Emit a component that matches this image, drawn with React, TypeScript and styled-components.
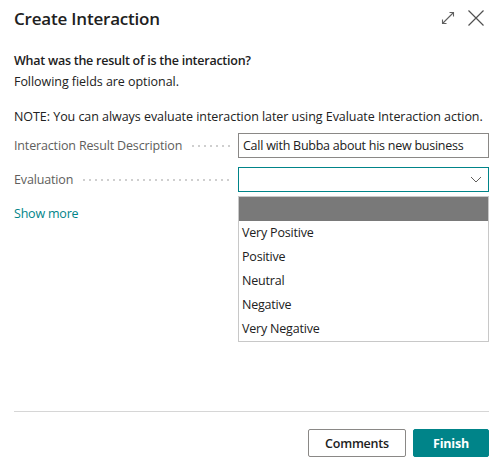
import styled, { createGlobalStyle } from 'styled-components'

const GlobalStyle = createGlobalStyle`
  html, body {
    margin: 0;
    padding: 0;
    background: #ffffff;
  }
  body {
    font-family: 'Open Sans', 'Noto Sans', sans-serif;
    color: #212121;
  }
`

const Dialog = styled.div`
  width: 498px;
  height: 470px;
  box-sizing: border-box;
  padding: 0 9px 0 14px;
  display: flex;
  flex-direction: column;
  background: #ffffff;
`

const Header = styled.div`
  height: 36px;
  display: flex;
  align-items: center;
  justify-content: space-between;
`

const Title = styled.h1`
  margin: 0;
  font-size: 17px;
  font-weight: 600;
  color: #212121;
  letter-spacing: -0.2px;
`

const HeaderActions = styled.div`
  display: flex;
  align-items: center;
  gap: 12px;
  padding-right: 4px;
`

const IconButton = styled.button`
  border: none;
  background: transparent;
  padding: 0;
  display: flex;
  align-items: center;
  justify-content: center;
  cursor: pointer;
`

const Body = styled.div`
  flex: 1;
  padding-top: 14px;
  display: flex;
  flex-direction: column;
`

const Intro = styled.p<{ $bold?: boolean }>`
  margin: 0;
  font-size: 12.5px;
  line-height: 21px;
  font-weight: ${({ $bold }) => ($bold ? 600 : 400)};
  letter-spacing: ${({ $bold }) => ($bold ? '-0.25px' : '-0.05px')};
`

const Note = styled(Intro)`
  margin-top: 14px;
`

const Fields = styled.div`
  margin-top: 6px;
  display: flex;
  flex-direction: column;
  gap: 9px;
`

const FieldRow = styled.div`
  display: grid;
  grid-template-columns: 224px 1fr;
  align-items: center;
`

const Label = styled.div`
  display: flex;
  align-items: center;
  font-size: 12.5px;
  color: #605e5c;
  letter-spacing: -0.15px;
  white-space: nowrap;
  overflow: hidden;
  padding-right: 6px;

  &::after {
    content: '';
    flex: 1;
    height: 2px;
    margin-left: 8px;
    background-image: radial-gradient(circle, #cfcfcf 1px, transparent 1.2px);
    background-size: 6px 2px;
    background-repeat: repeat-x;
  }
`

const InputBox = styled.div<{ $focused?: boolean }>`
  position: relative;
  height: 25px;
  box-sizing: border-box;
  border: 1px solid ${({ $focused }) => ($focused ? '#008489' : '#8a8886')};
  display: flex;
  align-items: center;
  justify-content: space-between;
  padding: 0 6px 0 4px;
  font-size: 12.5px;
  letter-spacing: -0.25px;
  color: #212121;
  background: #ffffff;
`

const Dropdown = styled.ul`
  position: absolute;
  top: 28px;
  left: -1px;
  right: -1px;
  margin: 0;
  padding: 0;
  list-style: none;
  border: 1px solid #c8c8c8;
  background: #ffffff;
  z-index: 2;
`

const Option = styled.li<{ $active?: boolean }>`
  height: 24px;
  line-height: 24px;
  padding: 0 3px;
  font-size: 12.5px;
  letter-spacing: -0.2px;
  color: #212121;
  background: ${({ $active }) => ($active ? '#797979' : 'transparent')};
`

const ShowMore = styled.a`
  margin-top: 12px;
  font-size: 12.5px;
  letter-spacing: -0.2px;
  color: #008489;
  line-height: 20px;
  cursor: pointer;
`

const Footer = styled.div`
  border-top: 1px solid #d6d6d6;
  height: 59px;
  box-sizing: border-box;
  padding-top: 17px;
  display: flex;
  justify-content: flex-end;
  gap: 7px;
`

const Button = styled.button<{ $primary?: boolean }>`
  height: 28px;
  width: ${({ $primary }) => ($primary ? '76px' : '98px')};
  box-sizing: border-box;
  padding: 0;
  font-family: inherit;
  font-size: 12.5px;
  letter-spacing: -0.2px;
  font-weight: ${({ $primary }) => ($primary ? 700 : 600)};
  color: ${({ $primary }) => ($primary ? '#ffffff' : '#212121')};
  background: ${({ $primary }) => ($primary ? '#008489' : '#ffffff')};
  border: 1px solid ${({ $primary }) => ($primary ? '#008489' : '#8a8886')};
  border-radius: 2px;
  cursor: pointer;
`

const options = ['Very Positive', 'Positive', 'Neutral', 'Negative', 'Very Negative']

function App() {
  return (
    <>
      <GlobalStyle />
      <Dialog>
        <Header>
          <Title>Create Interaction</Title>
          <HeaderActions>
            <IconButton aria-label="Expand">
              <svg width="14" height="14" viewBox="0 0 14 14" fill="none" stroke="#606060" strokeWidth="1.1">
                <path d="M1.5 12.5 L12.5 1.5 M8.5 1.5 H12.5 V5.5 M1.5 8.5 V12.5 H5.5" />
              </svg>
            </IconButton>
            <IconButton aria-label="Close">
              <svg width="18" height="18" viewBox="0 0 18 18" fill="none" stroke="#505050" strokeWidth="1.2">
                <path d="M1.5 1.5 L16.5 16.5 M16.5 1.5 L1.5 16.5" />
              </svg>
            </IconButton>
          </HeaderActions>
        </Header>
        <Body>
          <Intro $bold>What was the result of is the interaction?</Intro>
          <Intro>Following fields are optional.</Intro>
          <Note>NOTE: You can always evaluate interaction later using Evaluate Interaction action.</Note>
          <Fields>
            <FieldRow>
              <Label>Interaction Result Description</Label>
              <InputBox>Call with Bubba about his new business</InputBox>
            </FieldRow>
            <FieldRow>
              <Label>Evaluation</Label>
              <InputBox $focused>
                <span />
                <svg width="12" height="7" viewBox="0 0 12 7" fill="none" stroke="#605e5c" strokeWidth="1">
                  <path d="M1 1 L6 6 L11 1" />
                </svg>
                <Dropdown>
                  <Option $active>&nbsp;</Option>
                  {options.map((o) => (
                    <Option key={o}>{o}</Option>
                  ))}
                </Dropdown>
              </InputBox>
            </FieldRow>
          </Fields>
          <ShowMore>Show more</ShowMore>
        </Body>
        <Footer>
          <Button>Comments</Button>
          <Button $primary>Finish</Button>
        </Footer>
      </Dialog>
    </>
  )
}

export default App
